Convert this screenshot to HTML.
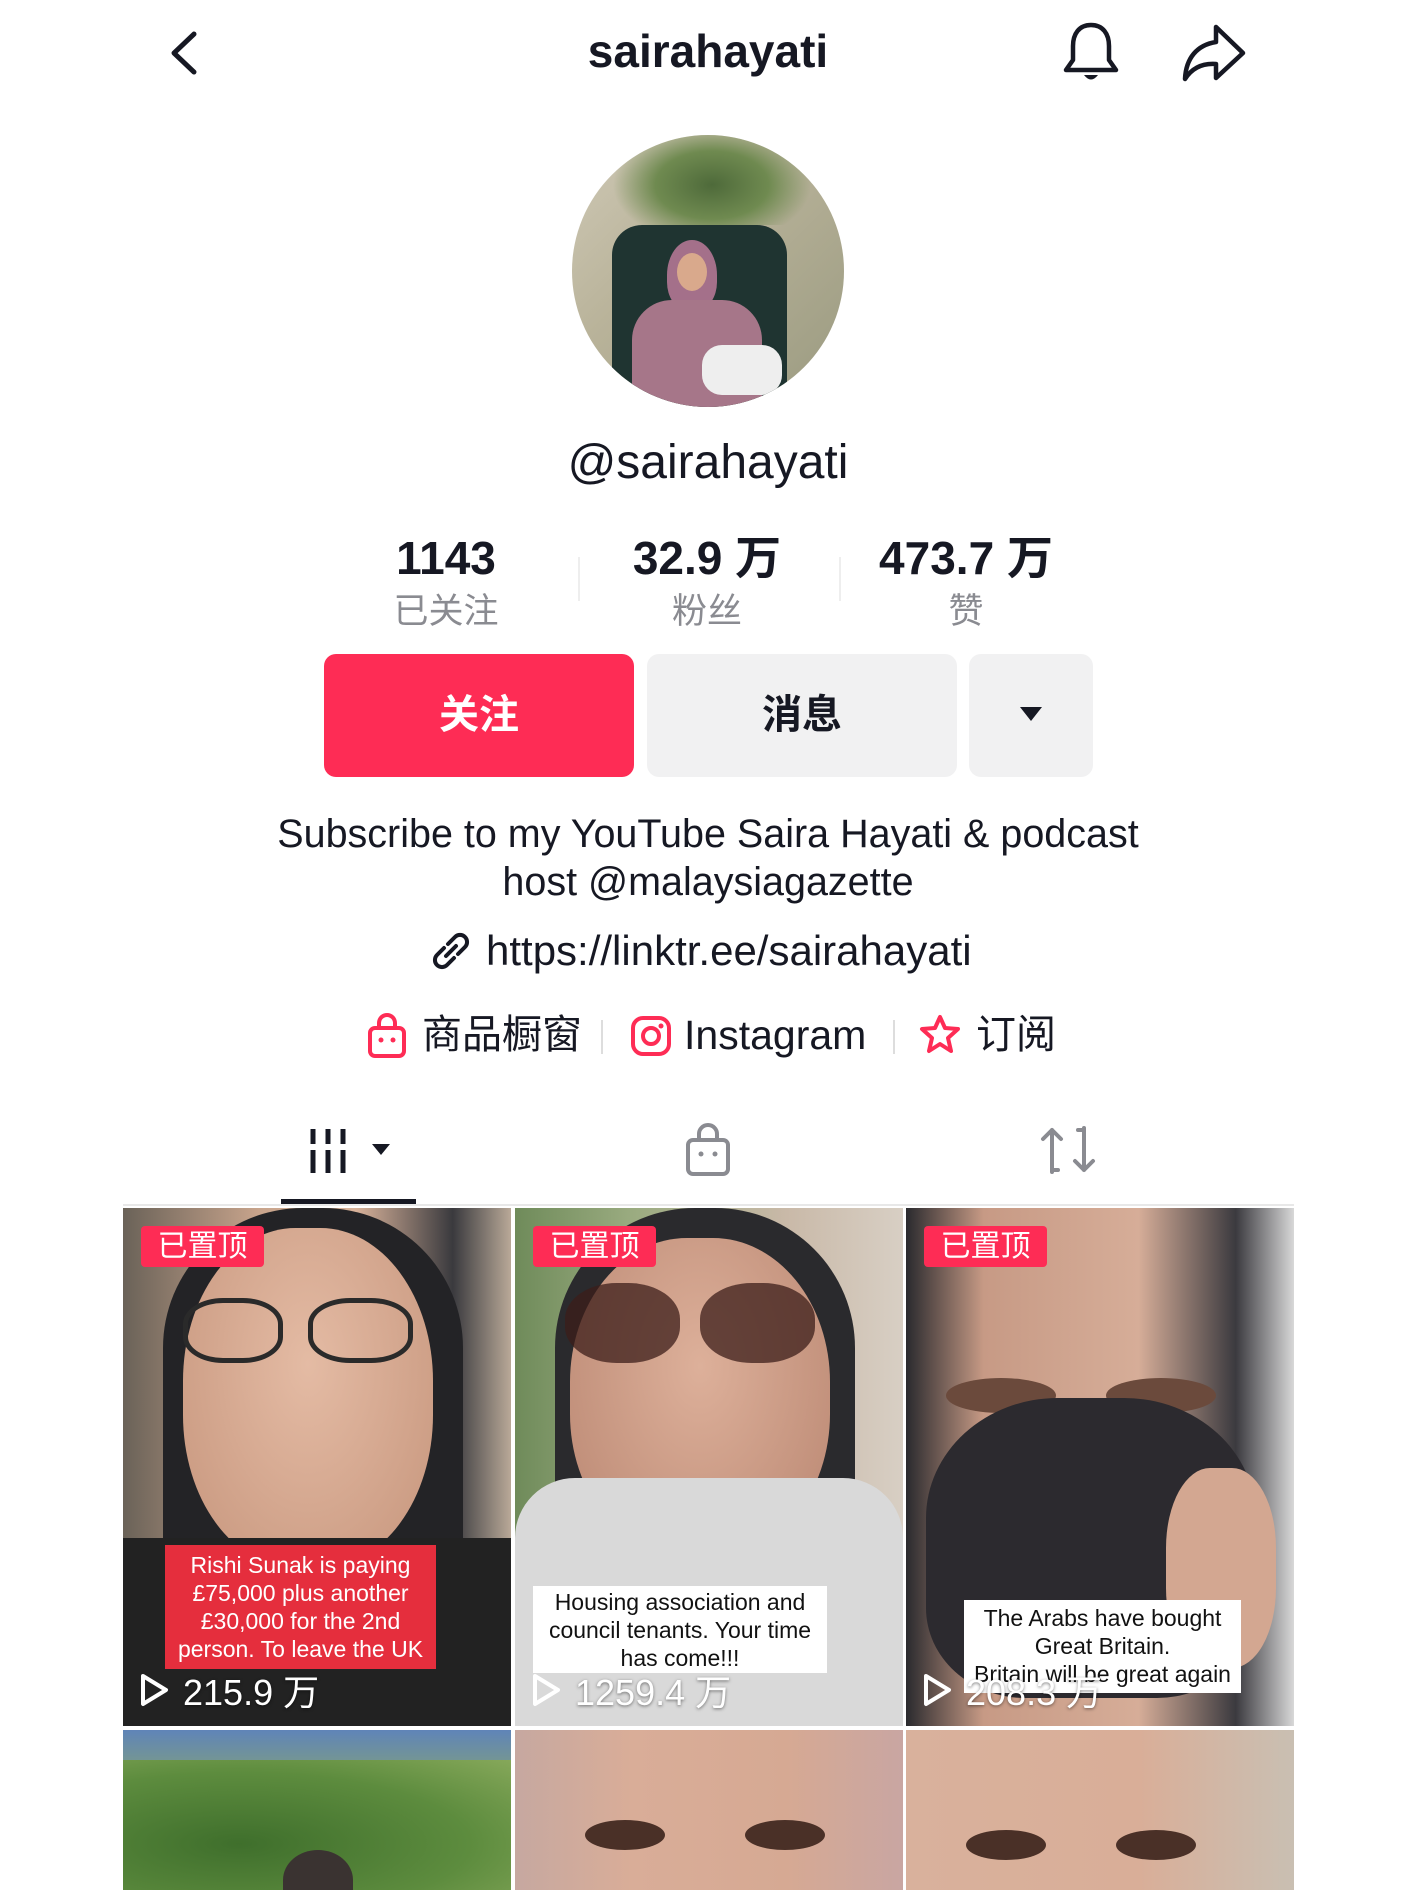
<!DOCTYPE html>
<html><head><meta charset="utf-8">
<style>
*{margin:0;padding:0;box-sizing:border-box}
body{width:1417px;height:1890px;background:#fff;position:relative;overflow:hidden;font-family:"Liberation Sans","Noto Sans CJK SC",sans-serif;color:#161823}
.a{position:absolute}
.c{text-align:center;white-space:nowrap}
.num{font-weight:bold;font-size:46px;line-height:56px;height:56px}
.lab{font-size:35px;color:#8a8b91;line-height:44px;height:44px}
.cell{position:absolute;overflow:hidden}
.badge{position:absolute;left:18px;top:18px;width:123px;height:41px;background:#fe2c55;color:#fff;font-size:30px;line-height:41px;text-align:center;border-radius:4px}
.play{position:absolute;left:16px;bottom:10px;color:#fff;font-size:36px;display:flex;align-items:center;gap:14px;text-shadow:0 1px 3px rgba(0,0,0,.5)}
.cap{position:absolute;font-size:23px;line-height:28px;text-align:center}
.lr{font-size:40px;line-height:50px;height:50px;white-space:nowrap}
</style></head><body>
<svg class="a" style="left:166px;top:30px" width="36" height="46" viewBox="0 0 36 46"><path d="M28 4 L8 23 L28 42" fill="none" stroke="#161823" stroke-width="5" stroke-linecap="round" stroke-linejoin="round"/></svg>
<div class="a c" style="left:508px;top:24px;width:400px;font-size:46px;line-height:54px;font-weight:bold">sairahayati</div>
<svg class="a" style="left:1060px;top:20px" width="62" height="66" viewBox="0 0 62 66"><path d="M31 5 C19 5 13 14 13 26 L13 40 L6 50 L56 50 L49 40 L49 26 C49 14 43 5 31 5 Z" fill="none" stroke="#161823" stroke-width="4.5" stroke-linejoin="round"/><path d="M24 55 Q31 64 38 55 Z" fill="#161823"/></svg>
<svg class="a" style="left:1180px;top:22px" width="68" height="62" viewBox="0 0 68 62"><path d="M36 5 L63 31 L36 56 L36 42 C22 41 12 46 5 57 C6 36 17 23 36 20 Z" fill="none" stroke="#161823" stroke-width="4.5" stroke-linejoin="round"/></svg>
<div class="a" style="left:572px;top:135px;width:272px;height:272px;border-radius:50%;overflow:hidden;background:linear-gradient(135deg,#cfc9b6 0%,#b9b39a 40%,#9a9a80 100%)">
 <div class="a" style="left:40px;top:-10px;width:200px;height:100px;background:radial-gradient(ellipse at 50% 60%,#4e6a3a 0%,#6f8a50 40%,transparent 70%)"></div>
 <div class="a" style="left:40px;top:90px;width:175px;height:200px;border-radius:30px 30px 0 0;background:#1f3431"></div>
 <div class="a" style="left:95px;top:105px;width:50px;height:70px;border-radius:50% 50% 40% 40%;background:#a4708a"></div>
 <div class="a" style="left:105px;top:118px;width:30px;height:38px;border-radius:50%;background:#d9a98c"></div>
 <div class="a" style="left:60px;top:165px;width:130px;height:120px;border-radius:40px 40px 0 0;background:#a67689"></div>
 <div class="a" style="left:130px;top:210px;width:80px;height:50px;border-radius:20px;background:#eee"></div>
</div>
<div class="a c" style="left:458px;top:434px;width:500px;font-size:48px;line-height:58px">@sairahayati</div>
<div class="a c num" style="left:346px;top:530px;width:200px">1143</div>
<div class="a c lab" style="left:346px;top:590px;width:200px">已关注</div>
<div class="a c num" style="left:587px;top:530px;width:240px">32.9 万</div>
<div class="a c lab" style="left:587px;top:590px;width:240px">粉丝</div>
<div class="a c num" style="left:846px;top:530px;width:240px">473.7 万</div>
<div class="a c lab" style="left:846px;top:590px;width:240px">赞</div>
<div class="a" style="left:578px;top:557px;width:2px;height:44px;background:#eee"></div>
<div class="a" style="left:839px;top:557px;width:2px;height:44px;background:#eee"></div>
<div class="a c" style="left:324px;top:654px;width:310px;height:123px;background:#fe2c55;border-radius:12px;color:#fff;font-size:40px;font-weight:bold;line-height:123px">关注</div>
<div class="a c" style="left:647px;top:654px;width:310px;height:123px;background:#f1f1f2;border-radius:12px;font-size:40px;font-weight:bold;line-height:123px">消息</div>
<div class="a" style="left:969px;top:654px;width:124px;height:123px;background:#f1f1f2;border-radius:12px"></div>
<svg class="a" style="left:1020px;top:707px" width="22" height="16" viewBox="0 0 22 16"><path d="M0 0 L22 0 L11 14 Z" fill="#161823"/></svg>
<div class="a c" style="left:108px;top:810px;width:1200px;font-size:39.5px;line-height:48px">Subscribe to my YouTube Saira Hayati &amp; podcast<br>host @malaysiagazette</div>
<svg class="a" style="left:430px;top:930px" width="42" height="42" viewBox="0 0 42 42"><g fill="none" stroke="#161823" stroke-width="4" stroke-linecap="round"><path d="M18 14 L25 7 A7 7 0 0 1 35 17 L28 24"/><path d="M24 28 L17 35 A7 7 0 0 1 7 25 L14 18"/><path d="M16 26 L26 16"/></g></svg>
<div class="a" style="left:486px;top:925px;font-size:42px;line-height:52px">https://linktr.ee/sairahayati</div>
<svg class="a" style="left:366px;top:1012px" width="42" height="48" viewBox="0 0 42 48"><g fill="none" stroke="#fe2c55" stroke-width="4"><rect x="4" y="16" width="34" height="28" rx="5"/><path d="M13 16 V11 A8 8 0 0 1 29 11 V16"/></g><circle cx="15" cy="28" r="2.5" fill="#fe2c55"/><circle cx="27" cy="28" r="2.5" fill="#fe2c55"/></svg>
<div class="a lr" style="left:422px;top:1010px">商品橱窗</div>
<div class="a" style="left:601px;top:1020px;width:2px;height:34px;background:#ddd"></div>
<svg class="a" style="left:630px;top:1015px" width="42" height="42" viewBox="0 0 42 42"><g fill="none" stroke="#fe2c55" stroke-width="4"><rect x="3" y="3" width="36" height="36" rx="10"/><circle cx="21" cy="21" r="8"/></g><circle cx="31" cy="11" r="2.5" fill="#fe2c55"/></svg>
<div class="a lr" style="left:684px;top:1010px;font-size:41px">Instagram</div>
<div class="a" style="left:893px;top:1020px;width:2px;height:34px;background:#ddd"></div>
<svg class="a" style="left:918px;top:1013px" width="44" height="46" viewBox="0 0 44 46"><path d="M22 4 L27 15 L40 16 L30 25 L33 38 L22 31 L11 38 L14 25 L4 16 L17 15 Z" fill="none" stroke="#fe2c55" stroke-width="4" stroke-linejoin="round"/></svg>
<div class="a lr" style="left:976px;top:1010px">订阅</div>
<svg class="a" style="left:308px;top:1126px" width="90" height="50" viewBox="0 0 90 50"><g stroke="#161823" stroke-width="5"><path d="M5 3 V18 M5 24 V47 M20 3 V18 M20 24 V47 M35 3 V18 M35 24 V47"/></g><path d="M64 18 L82 18 L73 29 Z" fill="#161823"/></svg>
<svg class="a" style="left:684px;top:1122px" width="48" height="56" viewBox="0 0 48 56"><g fill="none" stroke="#8a8b91" stroke-width="4"><rect x="4" y="18" width="40" height="34" rx="5"/><path d="M15 18 V12 A9 9 0 0 1 33 12 V18"/></g><circle cx="17" cy="32" r="2.5" fill="#8a8b91"/><circle cx="31" cy="32" r="2.5" fill="#8a8b91"/></svg>
<svg class="a" style="left:1038px;top:1124px" width="60" height="52" viewBox="0 0 60 52"><g fill="none" stroke="#8a8b91" stroke-width="4" stroke-linecap="round" stroke-linejoin="round"><path d="M14 48 V6 M5 15 L14 6 L23 15"/><path d="M14 46 H20"/><path d="M46 4 V46 M37 37 L46 46 L55 37"/><path d="M46 6 H40"/></g></svg>
<div class="a" style="left:281px;top:1199px;width:135px;height:5px;background:#161823"></div>
<div class="a" style="left:123px;top:1204px;width:1171px;height:2px;background:#e8e8e8"></div>
<div class="cell" style="left:123px;top:1208px;width:388px;height:518px;background:linear-gradient(90deg,#6a6258 0%,#c8a48c 35%,#d8b29a 60%,#3a3a3e 85%,#b9a998 100%)">
 <div class="a" style="left:40px;top:0;width:300px;height:518px;border-radius:140px 140px 0 0;background:#232326"></div>
 <div class="a" style="left:60px;top:20px;width:250px;height:340px;border-radius:45%;background:radial-gradient(ellipse at 50% 40%,#e4bba4,#c6957c)"></div>
 <div class="a" style="left:60px;top:90px;width:100px;height:65px;border:5px solid #2a2a2a;border-radius:40%"></div>
 <div class="a" style="left:185px;top:90px;width:105px;height:65px;border:5px solid #2a2a2a;border-radius:40%"></div>
 <div class="a" style="left:0;top:330px;width:388px;height:190px;background:#222"></div>
 <div class="cap" style="left:42px;top:337px;width:271px;height:124px;background:#e52e3d;color:#fff;padding-top:6px">Rishi Sunak is paying<br>£75,000 plus another<br>£30,000 for the 2nd<br>person. To leave the UK</div>
 <div class="badge">已置顶</div>
 <div class="play"><svg width="30" height="34" viewBox="0 0 30 34"><path d="M4 3 L27 17 L4 31 Z" fill="none" stroke="#fff" stroke-width="4" stroke-linejoin="round"/></svg>215.9 万</div>
</div>
<div class="cell" style="left:515px;top:1208px;width:388px;height:518px;background:linear-gradient(90deg,#6f8b5a 0%,#9aab80 30%,#c9b9a8 70%,#d8cfc4 100%)">
 <div class="a" style="left:40px;top:0;width:300px;height:300px;border-radius:140px 140px 0 0;background:#2a2a2d"></div>
 <div class="a" style="left:55px;top:30px;width:260px;height:320px;border-radius:45%;background:radial-gradient(ellipse at 50% 40%,#ddb09a,#b98671)"></div>
 <div class="a" style="left:50px;top:75px;width:115px;height:80px;border-radius:45%;background:rgba(60,30,25,.75)"></div>
 <div class="a" style="left:185px;top:75px;width:115px;height:80px;border-radius:45%;background:rgba(60,30,25,.75)"></div>
 <div class="a" style="left:0;top:270px;width:388px;height:250px;border-radius:60px 60px 0 0;background:#d9d9d9"></div>
 <div class="cap" style="left:18px;top:378px;width:294px;height:87px;background:#fff;color:#111;padding-top:2px">Housing association and<br>council tenants. Your time<br>has come!!!</div>
 <div class="badge">已置顶</div>
 <div class="play"><svg width="30" height="34" viewBox="0 0 30 34"><path d="M4 3 L27 17 L4 31 Z" fill="none" stroke="#fff" stroke-width="4" stroke-linejoin="round"/></svg>1259.4 万</div>
</div>
<div class="cell" style="left:906px;top:1208px;width:388px;height:518px;background:linear-gradient(90deg,#2a2a2e 0%,#c79a85 20%,#d6ad98 60%,#3b3a3f 85%,#d8d8d8 100%)">
 <div class="a" style="left:40px;top:170px;width:110px;height:35px;border-radius:50%;background:#6b4a3c"></div>
 <div class="a" style="left:200px;top:170px;width:110px;height:35px;border-radius:50%;background:#6b4a3c"></div>
 <div class="a" style="left:20px;top:190px;width:330px;height:300px;border-radius:40% 40% 30% 30%;background:#2c2a2f"></div>
 <div class="a" style="left:260px;top:260px;width:110px;height:200px;border-radius:40%;background:#d3a791"></div>
 <div class="cap" style="left:58px;top:392px;width:277px;height:93px;background:#fff;color:#111;padding-top:4px">The Arabs have bought<br>Great Britain.<br>Britain will be great again</div>
 <div class="badge">已置顶</div>
 <div class="play"><svg width="30" height="34" viewBox="0 0 30 34"><path d="M4 3 L27 17 L4 31 Z" fill="none" stroke="#fff" stroke-width="4" stroke-linejoin="round"/></svg>208.3 万</div>
</div>
<div class="cell" style="left:123px;top:1730px;width:388px;height:160px;background:linear-gradient(180deg,#5f84b8 0%,#8aa86e 40%,#4f7a3a 100%)">
 <div class="a" style="left:0;top:30px;width:388px;height:140px;background:radial-gradient(ellipse at 30% 60%,#3f6f2c,#5d8c3e 60%,#86a85a)"></div>
 <div class="a" style="left:160px;top:120px;width:70px;height:60px;border-radius:50% 50% 0 0;background:#3a3331"></div>
</div>
<div class="cell" style="left:515px;top:1730px;width:388px;height:160px;background:linear-gradient(90deg,#c6a8a0,#d9ad98 30%,#d6a993 70%,#c9a6a2)">
 <div class="a" style="left:70px;top:90px;width:80px;height:30px;border-radius:50%;background:#4a3027"></div>
 <div class="a" style="left:230px;top:90px;width:80px;height:30px;border-radius:50%;background:#4a3027"></div>
</div>
<div class="cell" style="left:906px;top:1730px;width:388px;height:160px;background:linear-gradient(90deg,#d9b19c,#d9ae98 60%,#c9bfb2)">
 <div class="a" style="left:60px;top:100px;width:80px;height:30px;border-radius:50%;background:#4a3027"></div>
 <div class="a" style="left:210px;top:100px;width:80px;height:30px;border-radius:50%;background:#4a3027"></div>
</div>
</body></html>
